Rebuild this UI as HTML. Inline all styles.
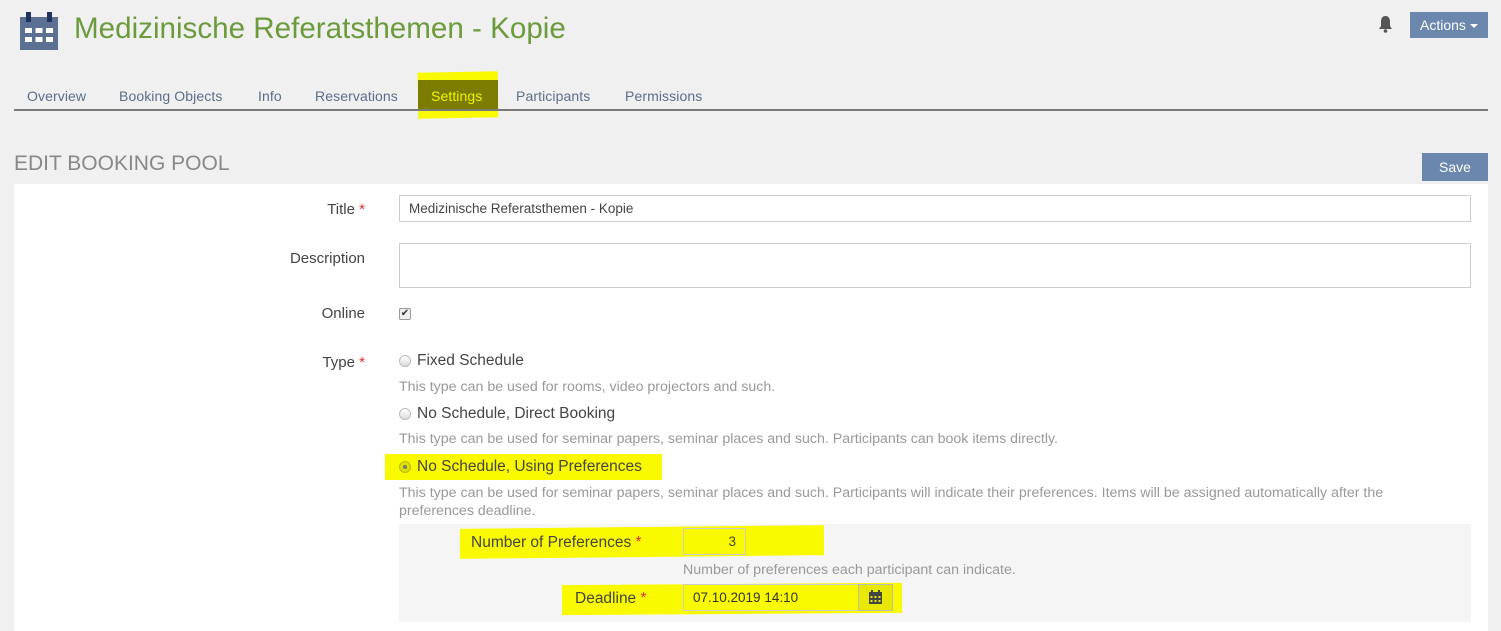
<!DOCTYPE html>
<html><head><meta charset="utf-8"><style>
*{box-sizing:border-box;margin:0;padding:0}
body{width:1501px;height:631px;background:#f0f0f0;font-family:"Liberation Sans",sans-serif;position:relative;overflow:hidden;color:#444}
.a{position:absolute;white-space:nowrap}
.tab{font-size:14px;color:#5b6e87;top:88px;letter-spacing:0.1px}
.lbl{font-size:15px;color:#444;text-align:right;right:1136px}
.req{color:#e03030}
.help{font-size:14.2px;color:#999}
.opt{font-size:15.5px;color:#444}
.radio{position:absolute;width:12px;height:12px;border:1px solid #bbb;border-radius:50%;background:linear-gradient(#fff,#ddd)}
.y{position:absolute;background:#f9f900}
</style></head><body>
<svg class="a" style="left:20px;top:12px" width="38" height="38" viewBox="0 0 38 38">
<rect x="0" y="5" width="38" height="33" fill="#5b7093"/>
<rect x="6" y="0" width="5" height="10" fill="#1e3360"/><rect x="27" y="0" width="5" height="10" fill="#1e3360"/>
<g fill="#fff"><rect x="5" y="16" width="7" height="5"/><rect x="15.5" y="16" width="7" height="5"/><rect x="26" y="16" width="7" height="5"/>
<rect x="5" y="25" width="7" height="5"/><rect x="15.5" y="25" width="7" height="5"/><rect x="26" y="25" width="7" height="5"/></g>
</svg>
<div class="a" style="left:74px;top:12px;font-size:29.6px;color:#6b9b3b">Medizinische Referatsthemen - Kopie</div>
<svg class="a" style="left:1378px;top:16px" width="15" height="17" viewBox="0 0 15 17"><path d="M7.5 0C4 0 3 3 3 6v4L1 13h13l-2-3V6c0-3-1-6-4.5-6z" fill="#555"/><circle cx="7.5" cy="15" r="1.8" fill="#555"/></svg>
<div class="a" style="left:1410px;top:12px;width:78px;height:26px;background:#6b87ad;color:#fff;font-size:14px;line-height:26px;padding-left:10px">Actions<span style="display:inline-block;margin-left:4px;border-left:4px solid transparent;border-right:4px solid transparent;border-top:4px solid #fff;vertical-align:middle"></span></div>
<div class="y" style="left:418px;top:72px;width:80px;height:46px;transform:rotate(-1deg)"></div>
<div class="a" style="left:418px;top:80px;width:80px;height:30px;background:#7c7c00"></div>
<div class="a tab" style="left:27px">Overview</div>
<div class="a tab" style="left:119px">Booking Objects</div>
<div class="a tab" style="left:258px">Info</div>
<div class="a tab" style="left:315px">Reservations</div>
<div class="a tab" style="left:431px;color:#f4f400">Settings</div>
<div class="a tab" style="left:516px">Participants</div>
<div class="a tab" style="left:625px">Permissions</div>
<div class="a" style="left:14px;top:109px;width:1474px;height:2px;background:#7a7a7a"></div>
<div class="a" style="left:14px;top:152px;font-size:21px;color:#888">EDIT BOOKING POOL</div>
<div class="a" style="left:1422px;top:153px;width:66px;height:28px;background:#6b87ad;color:#fff;font-size:14px;line-height:28px;text-align:center">Save</div>
<div class="a" style="left:14px;top:184px;width:1474px;height:447px;background:#fff"></div>
<div class="a lbl" style="top:201px">Title <span class="req">*</span></div>
<div class="a" style="left:399px;top:195px;width:1072px;height:27px;border:1px solid #ccc;font-size:13.5px;line-height:25px;padding-left:9px;color:#444">Medizinische Referatsthemen - Kopie</div>
<div class="a lbl" style="top:250px">Description</div>
<div class="a" style="left:399px;top:243px;width:1072px;height:45px;border:1px solid #ccc"></div>
<div class="a lbl" style="top:305px">Online</div>
<div class="a" style="left:399px;top:308px;width:12px;height:12px;border:1px solid #999;border-radius:2px;background:#eee;font-size:10px;line-height:10px;text-align:center;color:#333">✔</div>
<div class="a lbl" style="top:354px">Type <span class="req">*</span></div>
<div class="radio" style="left:399px;top:355px"></div>
<div class="a opt" style="left:417px;top:352px">Fixed Schedule</div>
<div class="a help" style="left:399px;top:379px">This type can be used for rooms, video projectors and such.</div>
<div class="radio" style="left:399px;top:408px"></div>
<div class="a opt" style="left:417px;top:405px">No Schedule, Direct Booking</div>
<div class="a help" style="left:399px;top:431px">This type can be used for seminar papers, seminar places and such. Participants can book items directly.</div>
<div class="y" style="left:385px;top:454px;width:277px;height:26px"></div>
<div class="radio" style="left:399px;top:461px;background:#e0e000;border-color:#bb0"></div>
<div class="a" style="left:403px;top:465px;width:4px;height:4px;border-radius:50%;background:#777"></div>
<div class="a opt" style="left:417px;top:458px">No Schedule, Using Preferences</div>
<div class="a help" style="left:399px;top:485px">This type can be used for seminar papers, seminar places and such. Participants will indicate their preferences. Items will be assigned automatically after the</div>
<div class="a help" style="left:399px;top:503px">preferences deadline.</div>
<div class="a" style="left:399px;top:524px;width:1072px;height:98px;background:#f5f5f5"></div>
<div class="y" style="left:460px;top:527px;width:364px;height:30px;transform:rotate(-0.6deg)"></div>
<div class="a" style="left:471px;top:534px;font-size:15.5px;color:#444">Number of Preferences <span class="req">*</span></div>
<div class="a" style="left:683px;top:528px;width:63px;height:27px;border:1px solid #ccc;font-size:13.5px;line-height:25px;text-align:right;padding-right:9px">3</div>
<div class="a help" style="left:683px;top:562px">Number of preferences each participant can indicate.</div>
<div class="y" style="left:562px;top:584px;width:340px;height:30px;transform:rotate(-0.4deg)"></div>
<div class="a" style="left:575px;top:590px;font-size:15.5px;color:#444">Deadline <span class="req">*</span></div>
<div class="a" style="left:683px;top:584px;width:176px;height:27px;border:1px solid #ccc;font-size:13.5px;line-height:25px;padding-left:9px;color:#333">07.10.2019 14:10</div>
<div class="a" style="left:858px;top:584px;width:35px;height:27px;border:1px solid #bbb;background:#e8e800"></div>
<svg class="a" style="left:869px;top:590px" width="13" height="14" viewBox="0 0 13 14"><rect x="0" y="2" width="13" height="12" fill="#444"/><rect x="2" y="0" width="2" height="3" fill="#444"/><rect x="9" y="0" width="2" height="3" fill="#444"/><g fill="#e8e800"><rect x="1.5" y="6" width="2" height="2"/><rect x="5.5" y="6" width="2" height="2"/><rect x="9.5" y="6" width="2" height="2"/><rect x="1.5" y="10" width="2" height="2"/><rect x="5.5" y="10" width="2" height="2"/><rect x="9.5" y="10" width="2" height="2"/></g></svg>
</body></html>
